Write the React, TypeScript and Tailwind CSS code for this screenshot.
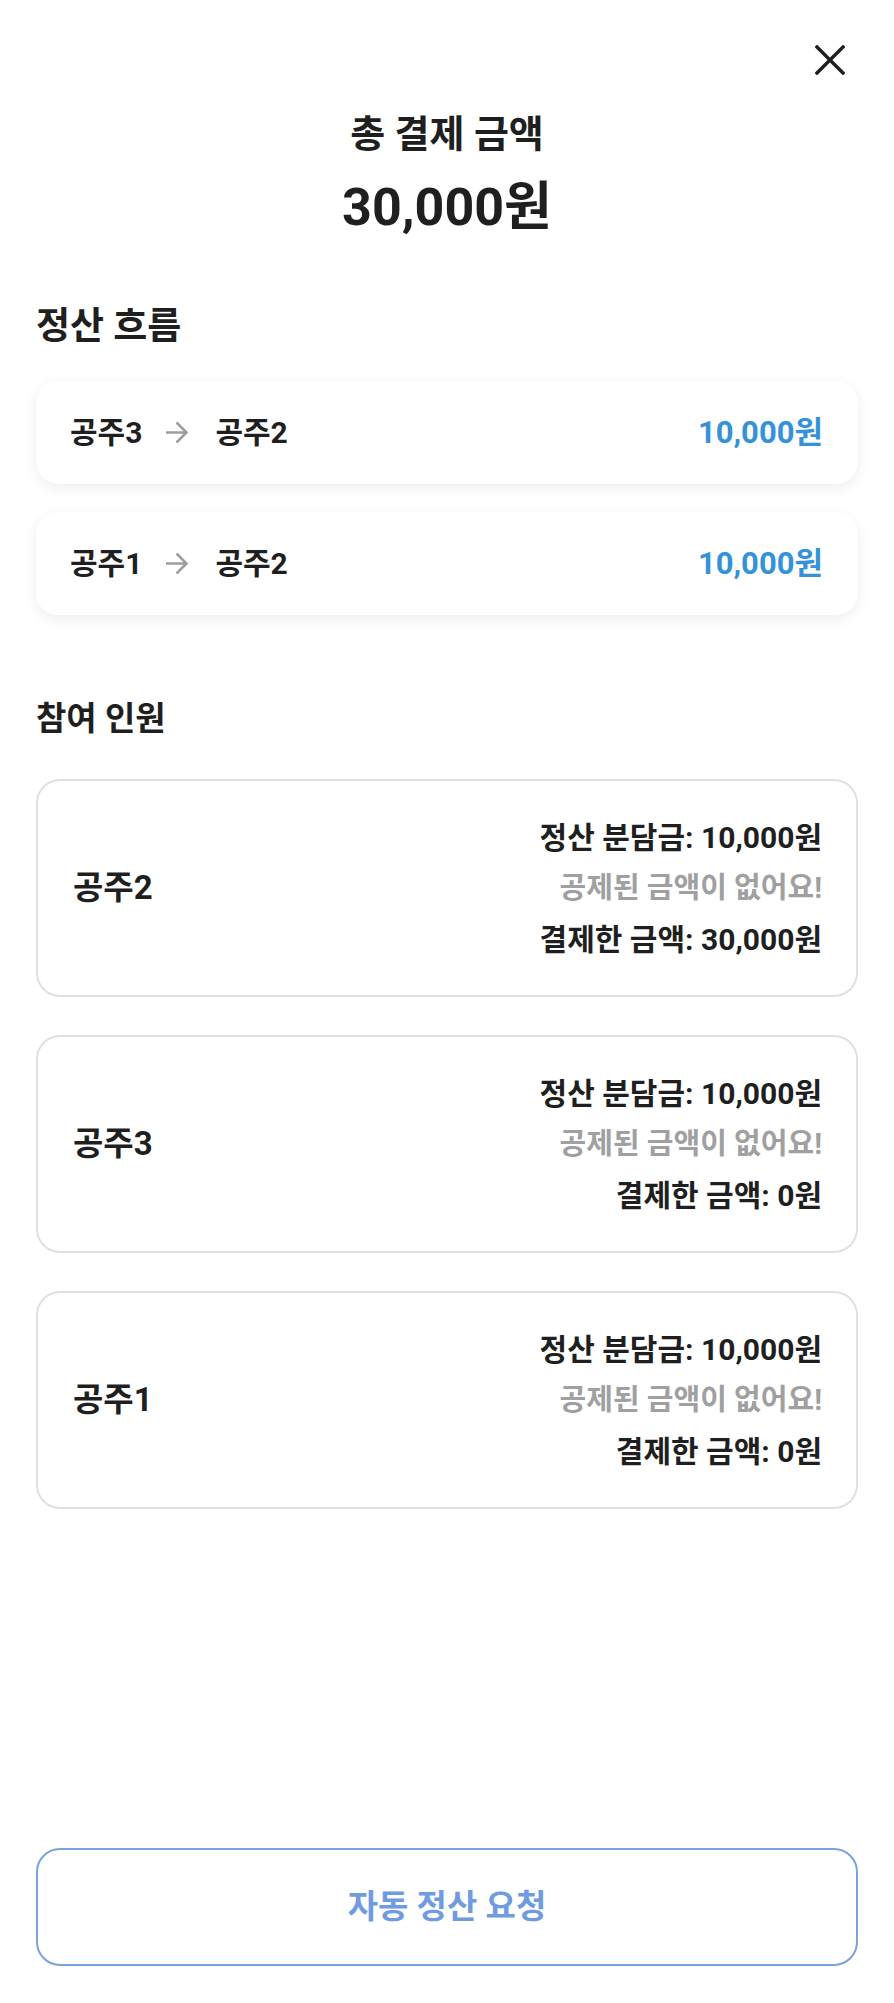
import React from 'react'

interface Transfer {
  from: string
  to: string
  amount: number
}

interface Member {
  name: string
  share: number
  deducted: number
  paid: number
}

const transfers: Transfer[] = [
  { from: '공주3', to: '공주2', amount: 10000 },
  { from: '공주1', to: '공주2', amount: 10000 },
]

const members: Member[] = [
  { name: '공주2', share: 10000, deducted: 0, paid: 30000 },
  { name: '공주3', share: 10000, deducted: 0, paid: 0 },
  { name: '공주1', share: 10000, deducted: 0, paid: 0 },
]

const won = (n: number) => `${n.toLocaleString('ko-KR')}원`

function CloseIcon() {
  return (
    <svg width="30" height="30" viewBox="0 0 30 30" fill="none">
      <path d="M2 2L28 28M28 2L2 28" stroke="#1f1f1f" strokeWidth="3.4" strokeLinecap="square" />
    </svg>
  )
}

function ArrowIcon() {
  return (
    <svg width="24" height="25" viewBox="0 0 24 25" fill="none">
      <path d="M1 12.5H21M11.5 2.5L21.5 12.5L11.5 22.5" stroke="#9e9e9e" strokeWidth="2.6" />
    </svg>
  )
}

export default function App() {
  return (
    <div className="min-h-screen bg-white flex flex-col px-[36px] pb-[37px] font-['Roboto','Noto_Sans_CJK_KR',sans-serif] text-[#1f1f1f]">
      {/* header */}
      <div className="flex justify-end pt-[45px] pr-[13px]">
        <button type="button" className="w-[30px] h-[30px]">
          <CloseIcon />
        </button>
      </div>

      <p className="mt-[39px] text-center text-[38px] leading-[40px] font-bold">총 결제 금액</p>
      <p className="mt-[26px] text-center text-[52px] leading-[56px] font-bold">{won(30000)}</p>

      {/* settlement flow */}
      <h2 className="mt-[71px] text-[37px] leading-[40px] font-bold">정산 흐름</h2>
      <div className="mt-[34px] flex flex-col gap-[28px]">
        {transfers.map((t) => (
          <div
            key={t.from}
            className="h-[103px] rounded-[22px] bg-white shadow-[0_4px_14px_rgba(0,0,0,0.07)] flex items-center justify-between pl-[34px] pr-[35px]"
          >
            <div className="flex items-center text-[30px] leading-[34px] font-bold">
              <span>{t.from}</span>
              <span className="ml-[23px] mr-[26px] flex items-center">
                <ArrowIcon />
              </span>
              <span>{t.to}</span>
            </div>
            <span className="text-[31px] leading-[36px] font-bold text-[#3592d8]">{won(t.amount)}</span>
          </div>
        ))}
      </div>

      {/* participants */}
      <h2 className="mt-[86px] text-[33px] leading-[36px] font-bold">참여 인원</h2>
      <div className="mt-[42px] flex flex-col gap-[38px]">
        {members.map((m) => (
          <div
            key={m.name}
            className="h-[218px] rounded-[24px] border-2 border-[#e0e0e0] flex items-center justify-between pl-[35px] pr-[34px]"
          >
            <span className="text-[33px] leading-[38px] font-bold">{m.name}</span>
            <div className="flex flex-col items-end text-[30px] leading-[51px] font-bold">
              <span>정산 분담금: {won(m.share)}</span>
              <span className="text-[29px] text-[#a0a0a0]">
                {m.deducted > 0 ? `공제된 금액: ${won(m.deducted)}` : '공제된 금액이 없어요!'}
              </span>
              <span>결제한 금액: {won(m.paid)}</span>
            </div>
          </div>
        ))}
      </div>

      <button
        type="button"
        className="mt-auto h-[118px] w-full rounded-[24px] border-2 border-[#7aa3dc] bg-white text-[33px] font-bold text-[#6f9be0]"
      >
        자동 정산 요청
      </button>
    </div>
  )
}
